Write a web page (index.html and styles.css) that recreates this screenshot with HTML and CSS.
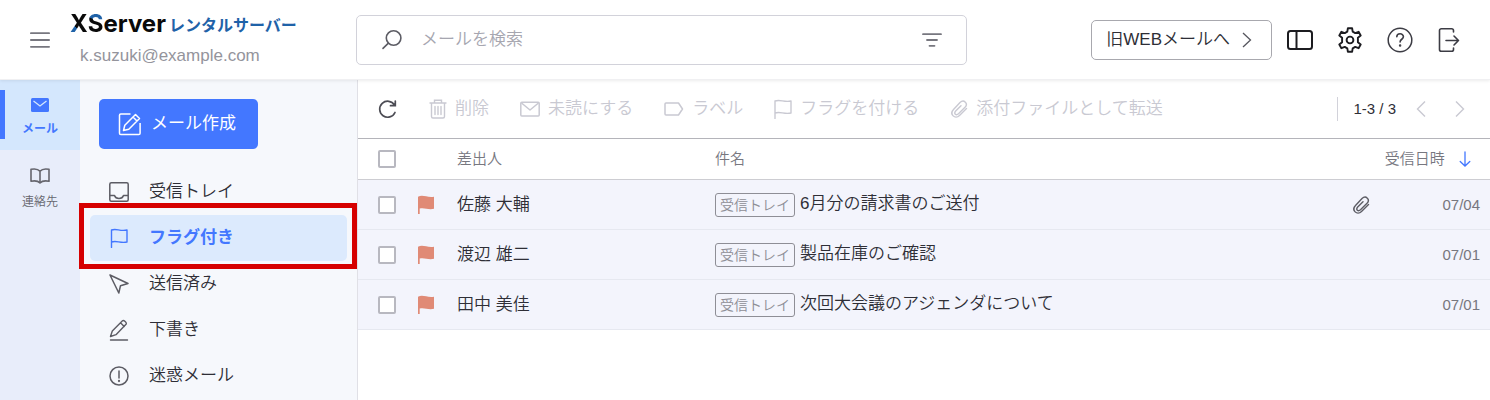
FILE: index.html
```html
<!DOCTYPE html>
<html lang="ja">
<head>
    <meta charset="UTF-8">
    <meta name="viewport" content="width=device-width, initial-scale=1.0">
    <title>XServer レンタルサーバー - メール</title>
    <link rel="stylesheet" href="styles.css">
</head>
<body>
    <header class="header">
        <div class="brand">
            <button class="icon-btn" type="button" aria-label="メニュー">
                <svg width="20" height="16" viewBox="0 0 20 16" fill="none" stroke="#77777f" stroke-width="1.8" stroke-linecap="round"><path d="M.9 1.2h18.2M.9 8h18.2M.9 14.8h18.2"/></svg>
            </button>
            <div class="brand-text">
                <div class="logo"><span class="logo-x">X</span><span class="logo-s">S</span>erver<span class="logo-sub">レンタルサーバー</span></div>
                <div class="account">k.suzuki@example.com</div>
            </div>
        </div>
        <div class="search">
            <svg width="22" height="22" viewBox="0 0 22 22" fill="none" stroke="#5c5c64" stroke-width="1.6" stroke-linecap="round"><circle cx="12.6" cy="9" r="7.3"/><path d="M7.4 14.2L2 19.4"/></svg>
            <input type="text" class="search-input" placeholder="メールを検索" aria-label="メールを検索">
            <button class="icon-btn" type="button" aria-label="絞り込み">
                <svg width="20" height="14" viewBox="0 0 20 14" fill="none" stroke="#77777f" stroke-width="1.8" stroke-linecap="round"><path d="M1 1.2h18M5 7h10M7.5 12.8h5"/></svg>
            </button>
        </div>
        <div class="header-actions">
            <button class="old-mail" type="button">旧WEBメールへ
                <svg width="10" height="16" viewBox="0 0 10 16" fill="none" stroke="#55555d" stroke-width="1.3"><path d="M1 1l7.5 7L1 15"/></svg>
            </button>
            <button class="icon-btn" type="button" aria-label="レイアウト">
                <svg width="26" height="20" viewBox="0 0 26 20" fill="none" stroke="#1c1c20" stroke-width="2"><rect x="1" y="1" width="24" height="18" rx="2.5"/><path d="M9.5 1v18"/></svg>
            </button>
            <button class="icon-btn" type="button" aria-label="設定">
                <svg width="26" height="26" viewBox="0 0 26 26" fill="none" stroke="#1c1c20" stroke-width="1.9" stroke-linejoin="round"><path d="M10.9 1.2h4.2l.6 3.5 2.5 1.4 3.4-1.3 2.1 3.6-2.8 2.3v4.6l2.8 2.3-2.1 3.6-3.4-1.3-2.5 1.4-.6 3.5h-4.2l-.6-3.5-2.5-1.4-3.4 1.3-2.1-3.6 2.8-2.3v-4.6L2.3 8.4l2.1-3.6 3.4 1.3 2.5-1.4z"/><circle cx="13" cy="13" r="3.4"/></svg>
            </button>
            <button class="icon-btn" type="button" aria-label="ヘルプ">
                <svg width="26" height="26" viewBox="0 0 26 26" fill="none" stroke="#3c3c44" stroke-width="1.5" stroke-linecap="round"><circle cx="13" cy="13" r="11.8"/><path d="M9.8 9.8c0-4 6.6-4 6.6 0 0 2.5-3.3 2.4-3.3 5.1" stroke-width="1.6"/><circle cx="13.1" cy="18.4" r=".5" fill="#3c3c44"/></svg>
            </button>
            <button class="icon-btn" type="button" aria-label="ログアウト">
                <svg width="26" height="26" viewBox="0 0 26 26" fill="none" stroke="#3c3c44" stroke-width="1.6" stroke-linecap="round" stroke-linejoin="round"><path d="M16.5 5V3.600c0-1.200-.7-1.900-1.900-1.900H4.400c-1.200 0-1.900.7-1.900 1.900v18.800c0 1.200.7 1.900 1.900 1.900h10.200c1.200 0 1.900-.7 1.900-1.900V21M9 13.500h12.500M17 9l4.500 4.500L17 18"/></svg>
            </button>
        </div>
    </header>

    <div class="container">
        <nav class="rail">
            <a class="rail-item active" href="#">
                <svg width="18" height="16" viewBox="0 0 18 16"><rect y="1" width="18" height="14" rx="1.5" fill="#4377ff"/><path d="M2.5 4L9 9l6.500-5" fill="none" stroke="#d4e7fd" stroke-width="1.3"/></svg>
                メール
            </a>
            <a class="rail-item" href="#">
                <svg width="20" height="16" viewBox="0 0 20 16" fill="none" stroke="#66666e" stroke-width="1.6" stroke-linejoin="round"><path d="M10 3.300C8 .8 4 .7 1 1.300v12c3-.6 7-.5 9 1.700 2-2.200 6-2.300 9-1.700v-12c-3-.6-7-.5-9 2zV15"/></svg>
                連絡先
            </a>
        </nav>

        <aside class="sidebar">
            <button class="compose" type="button">
                <svg width="24" height="24" viewBox="0 0 24 24" fill="none" stroke="#fff" stroke-width="1.5" stroke-linejoin="round"><path d="M12.500 2H2.800c-.8 0-1.300.5-1.300 1.300v17.900c0 .8.500 1.300 1.300 1.300h18c.8 0 1.300-.5 1.300-1.300V11"/><path d="M5.500 18.500l1.300-5.300L17.500 2.500l4 4-10.700 10.700zM15 5l4 4"/></svg>
                メール作成
            </button>
            <nav class="folders">
                <a class="folder" href="#">
                    <svg width="20" height="20" viewBox="0 0 20 20" fill="none" stroke="#5c5c64" stroke-width="1.5" stroke-linejoin="round"><rect x=".8" y=".8" width="18.4" height="18.4" rx="1.5"/><path d="M1 13.500h4.500c1.200 4 7.800 4 9 0H19"/></svg>
                    受信トレイ
                </a>
                <a class="folder active" href="#">
                    <svg width="20" height="20" viewBox="0 0 20 20" fill="none" stroke="#4377ff" stroke-width="1.4" stroke-linecap="round" stroke-linejoin="round"><path d="M2.500 19.500V2c5-2 8 1.500 15.500 0v12c-7 1.500-10.500-2-15.500 0"/></svg>
                    フラグ付き
                </a>
                <a class="folder" href="#">
                    <svg width="20" height="20" viewBox="0 0 20 20" fill="none" stroke="#5c5c64" stroke-width="1.5" stroke-linejoin="round"><path d="M1 1l18 8.500-7.500 2.200L9.800 19z"/></svg>
                    送信済み
                </a>
                <a class="folder" href="#">
                    <svg width="20" height="22" viewBox="0 0 20 22" fill="none" stroke="#5c5c64" stroke-width="1.4" stroke-linecap="round" stroke-linejoin="round"><path d="M1.500 17.500l1.800-5.500L13.500 1.800c1.200-1.200 4.700 2 3.500 3.500L7 15.700zM11.500 3.800l3.700 3.700M1.500 21h17"/></svg>
                    下書き
                </a>
                <a class="folder" href="#">
                    <svg width="20" height="20" viewBox="0 0 20 20" fill="none" stroke="#5c5c64" stroke-width="1.5" stroke-linecap="round"><circle cx="10" cy="10" r="9"/><path d="M10 5v7"/><circle cx="10" cy="15" r=".4" fill="#5c5c64"/></svg>
                    迷惑メール
                </a>
            </nav>
        </aside>

        <main class="main">
            <div class="toolbar">
                <button class="icon-btn" type="button" aria-label="更新">
                    <svg width="20" height="20" viewBox="0 0 20 20" fill="none" stroke="#4c4c54" stroke-width="1.7" stroke-linecap="round"><path d="M17 13.500A8 8 0 1 1 16.500 6M17.300 2v4.700h-4.800"/></svg>
                </button>
                <button class="tool" type="button" disabled>
                    <svg width="18" height="20" viewBox="0 0 18 20" fill="none" stroke="#c9c9d2" stroke-width="1.400" stroke-linecap="round"><path d="M1 4h16M5.500 4V1.200h7V4M2.500 4v13.500c0 1 .5 1.500 1.500 1.500h10c1 0 1.500-.5 1.500-1.500V4M6 7.500v8M9 7.500v8M12 7.500v8"/></svg>
                    削除
                </button>
                <button class="tool" type="button" disabled>
                    <svg width="20" height="16" viewBox="0 0 20 16" fill="none" stroke="#c9c9d2" stroke-width="1.5" stroke-linejoin="round"><rect x=".8" y="1.200" width="18.400" height="13.800" rx="1"/><path d="M1.500 2L10 9l8.500-7"/></svg>
                    未読にする
                </button>
                <button class="tool" type="button" disabled>
                    <svg width="20" height="14" viewBox="0 0 20 14" fill="none" stroke="#c9c9d2" stroke-width="1.5" stroke-linejoin="round"><path d="M1 2c0-.7.300-1 1-1h12.500L18.500 7l-4 6H2c-.7 0-1-.3-1-1z"/></svg>
                    ラベル
                </button>
                <button class="tool" type="button" disabled>
                    <svg width="18" height="20" viewBox="0 0 18 20" fill="none" stroke="#c9c9d2" stroke-width="1.4" stroke-linecap="round" stroke-linejoin="round"><path d="M1 19.500V2c5-2 9 1.500 16 0v12c-7 1.500-11-2-16 0"/></svg>
                    フラグを付ける
                </button>
                <button class="tool" type="button" disabled>
                    <svg width="18" height="18" viewBox="0 0 18 18" fill="none" stroke="#c9c9d2" stroke-width="1.4" stroke-linecap="round"><path d="M16.500 8.500l-7 7c-4.500 4.500-10.500-1.500-6-6l6.500-7c4-3.500 8.500 1 5 4.800l-6.500 6.500c-2.500 2.200-5-.4-2.800-2.700l5.300-5.300"/></svg>
                    添付ファイルとして転送
                </button>
                <div class="pager">
                    <span>1-3 / 3</span>
                    <button class="icon-btn" type="button" disabled aria-label="前へ">
                        <svg width="10" height="16" viewBox="0 0 10 16" fill="none" stroke="#c9c9d2" stroke-width="1.4"><path d="M9 .5L1.500 8 9 15.500"/></svg>
                    </button>
                    <button class="icon-btn" type="button" disabled aria-label="次へ">
                        <svg width="10" height="16" viewBox="0 0 10 16" fill="none" stroke="#c9c9d2" stroke-width="1.4"><path d="M1 .5L8.500 8 1 15.500"/></svg>
                    </button>
                </div>
            </div>

            <table class="mail-list">
                <thead>
                    <tr>
                        <th class="col-check"><input type="checkbox" class="check" aria-label="すべて選択"></th>
                        <th class="col-flag"></th>
                        <th class="col-from">差出人</th>
                        <th>件名</th>
                        <th class="col-date" colspan="2">受信日時
                            <svg class="sort" width="12" height="16" viewBox="0 0 12 16" fill="none" stroke="#4377ff" stroke-width="1.3" stroke-linecap="round"><path d="M6 1v14M1.200 10.500L6 15l4.800-4.500"/></svg>
                        </th>
                    </tr>
                </thead>
                <tbody>
                    <tr>
                        <td class="col-check"><input type="checkbox" class="check" aria-label="佐藤 大輔"></td>
                        <td class="col-flag"><svg width="18" height="20" viewBox="0 0 18 20" fill="#e08a76"><path d="M0 1.800c5-2.600 9 1.200 16 0v12c-6 1.400-9.500-1.600-14.300-.3V19H0z"/></svg></td>
                        <td>佐藤 大輔</td>
                        <td><span class="tag">受信トレイ</span>6月分の請求書のご送付</td>
                        <td class="col-clip"><svg width="18" height="18" viewBox="0 0 18 18" fill="none" stroke="#5c5c64" stroke-width="1.4" stroke-linecap="round"><path d="M16.500 8.500l-7 7c-4.500 4.500-10.500-1.500-6-6l6.500-7c4-3.500 8.500 1 5 4.800l-6.500 6.500c-2.500 2.200-5-.4-2.800-2.700l5.300-5.300"/></svg></td>
                        <td class="date">07/04</td>
                    </tr>
                    <tr>
                        <td class="col-check"><input type="checkbox" class="check" aria-label="渡辺 雄二"></td>
                        <td class="col-flag"><svg width="18" height="20" viewBox="0 0 18 20" fill="#e08a76"><path d="M0 1.800c5-2.600 9 1.200 16 0v12c-6 1.400-9.500-1.600-14.300-.3V19H0z"/></svg></td>
                        <td>渡辺 雄二</td>
                        <td><span class="tag">受信トレイ</span>製品在庫のご確認</td>
                        <td class="col-clip"></td>
                        <td class="date">07/01</td>
                    </tr>
                    <tr>
                        <td class="col-check"><input type="checkbox" class="check" aria-label="田中 美佳"></td>
                        <td class="col-flag"><svg width="18" height="20" viewBox="0 0 18 20" fill="#e08a76"><path d="M0 1.800c5-2.600 9 1.200 16 0v12c-6 1.400-9.500-1.600-14.300-.3V19H0z"/></svg></td>
                        <td>田中 美佳</td>
                        <td><span class="tag">受信トレイ</span>次回大会議のアジェンダについて</td>
                        <td class="col-clip"></td>
                        <td class="date">07/01</td>
                    </tr>
                </tbody>
            </table>
        </main>
    </div>
</body>
</html>
```
FILE: styles.css
```css
* {
    box-sizing: border-box;
}

body {
    margin: 0;
    min-height: 100vh;
    display: flex;
    flex-direction: column;
    font-family: "Liberation Sans", "Noto Sans CJK JP", sans-serif;
    font-size: 17px;
    font-weight: 350;
    line-height: 24px;
    color: #2e2e36;
    background-color: #fff;
}

button,
input {
    font: inherit;
    color: inherit;
}

a {
    color: inherit;
    text-decoration: none;
}

svg {
    display: block;
    flex-shrink: 0;
}

.icon-btn {
    display: flex;
    padding: 0;
    border: none;
    background: none;
    cursor: pointer;
}

/* Header */
.header {
    display: flex;
    align-items: center;
    height: 80px;
    padding-right: 27px;
    border-bottom: 1px solid #f0f0f2;
    box-shadow: 0 1px 3px rgba(0, 0, 0, 0.08);
    position: relative;
}

.brand {
    display: flex;
    align-items: center;
    gap: 20px;
    width: 356px;
    padding-left: 30px;
}

.logo {
    display: flex;
    align-items: center;
    font-family: "Inter", sans-serif;
    font-size: 24px;
    font-weight: 700;
    line-height: 32px;
    color: #0a0a0a;
}

.logo-x,
.logo-s {
    background: linear-gradient(45deg, #1f62a8 36%, #0a0a0a 37%);
    background-clip: text;
    -webkit-background-clip: text;
    color: transparent;
}

.logo-s {
    background-image: linear-gradient(205deg, #1f62a8 40%, #0a0a0a 41%);
}

.logo-sub {
    margin-left: 3px;
    font-family: "Noto Sans CJK JP", sans-serif;
    font-size: 16px;
    color: #1f62a8;
}

.account {
    padding-left: 10px;
    margin-bottom: 4px;
    color: #94949c;
}

.brand-text {
    display: flex;
    flex-direction: column;
    gap: 4px;
}

.search {
    display: flex;
    align-items: center;
    flex: 0 1 611px;
    height: 50px;
    padding: 0 24px;
    border: 1px solid #d2d2da;
    border-radius: 5px;
}

.search-input {
    flex: 1;
    min-width: 0;
    padding: 0 18px;
    border: none;
    outline: none;
    background: none;
}

.search-input::placeholder {
    color: #a6a6b0;
    opacity: 1;
}

.header-actions {
    display: flex;
    align-items: center;
    gap: 24px;
    margin-left: auto;
}

.old-mail {
    display: flex;
    align-items: center;
    gap: 12px;
    height: 40px;
    margin-right: -9px;
    padding: 0 19px 0 14px;
    border: 1px solid #a8a8ae;
    border-radius: 5px;
    background: #fff;
    cursor: pointer;
}

/* Left rail */
.container {
    display: flex;
    flex: 1;
}

.rail {
    width: 80px;
    background-color: #e8edfa;
}

.rail-item {
    display: flex;
    flex-direction: column;
    align-items: center;
    gap: 7px;
    height: 70px;
    padding-top: 17px;
    font-size: 12px;
    line-height: 18px;
    color: #66666e;
}

.rail-item + .rail-item {
    padding-top: 18px;
    gap: 9px;
}

.rail-item.active {
    background: linear-gradient(#4377ff, #4377ff) 0 10px / 5px 49px no-repeat #d4e7fd;
    color: #4377ff;
    font-weight: 700;
}

/* Folder list */
.sidebar {
    width: 278px;
    padding: 19px 10px 0;
    border-right: 1px solid #e0e0e6;
    background-color: #f6f8fc;
}

.compose {
    display: flex;
    align-items: center;
    gap: 9px;
    width: 159px;
    height: 50px;
    margin: 0 0 20px 9px;
    padding: 0 19px;
    border: none;
    border-radius: 5px;
    background-color: #4377ff;
    color: #fff;
    font-weight: 400;
    cursor: pointer;
}

.folder {
    display: flex;
    align-items: center;
    gap: 20px;
    height: 46px;
    padding-left: 19px;
    border-radius: 5px;
}

.folder.active {
    position: relative;
    background-color: #dceafd;
    color: #4377ff;
    font-weight: 700;
}

/* Highlight frame around the selected folder */
.folder.active::after {
    content: "";
    position: absolute;
    inset: -12px -10px -8px -11px;
    border: 5px solid #d60000;
}

/* Mail list */
.main {
    flex: 1;
    min-width: 0;
}

.toolbar {
    display: flex;
    align-items: center;
    gap: 31px;
    height: 58px;
    padding: 0 25px 0 20px;
}

.tool {
    display: flex;
    align-items: center;
    gap: 8px;
    padding: 0;
    border: none;
    background: none;
    color: #c9c9d2;
    white-space: nowrap;
}

.pager {
    display: flex;
    align-items: center;
    gap: 20px;
    margin-left: auto;
    padding-left: 15px;
    border-left: 1px solid #d2d2da;
    font-size: 15px;
}

.pager .icon-btn + .icon-btn {
    margin-left: 9px;
}

.mail-list {
    width: 100%;
    border-collapse: collapse;
    table-layout: fixed;
    border-top: 1px solid #b4b4ba;
}

.mail-list th {
    height: 41px;
    padding: 0;
    font-size: 15px;
    font-weight: 350;
    text-align: left;
    color: #77777f;
    border-bottom: 1px solid #cdcdd2;
}

.mail-list td {
    height: 50px;
    padding: 0;
    background-color: #f3f4fc;
    border-bottom: 1px solid #e6e8f0;
}

.mail-list .col-check {
    width: 60px;
    padding-left: 20px;
}

.col-flag {
    width: 39px;
}

.col-from {
    width: 258px;
}

.mail-list .col-date {
    width: 138px;
    padding-right: 19px;
    text-align: right;
}

.sort {
    display: inline-block;
    margin-left: 10px;
    vertical-align: -3px;
}

.check {
    display: block;
    appearance: none;
    width: 18px;
    height: 18px;
    margin: 0;
    border: 2px solid #b8b8c0;
    border-radius: 2px;
    background-color: #fff;
}

.tag {
    display: inline-block;
    margin-right: 5px;
    padding: 0 4px;
    border: 1px solid #8e8e96;
    border-radius: 3px;
    font-size: 14px;
    line-height: 22px;
    color: #8e8e96;
    vertical-align: middle;
}

.mail-list .date {
    padding-right: 10px;
    font-size: 15px;
    text-align: right;
    color: #77777f;
}
```
